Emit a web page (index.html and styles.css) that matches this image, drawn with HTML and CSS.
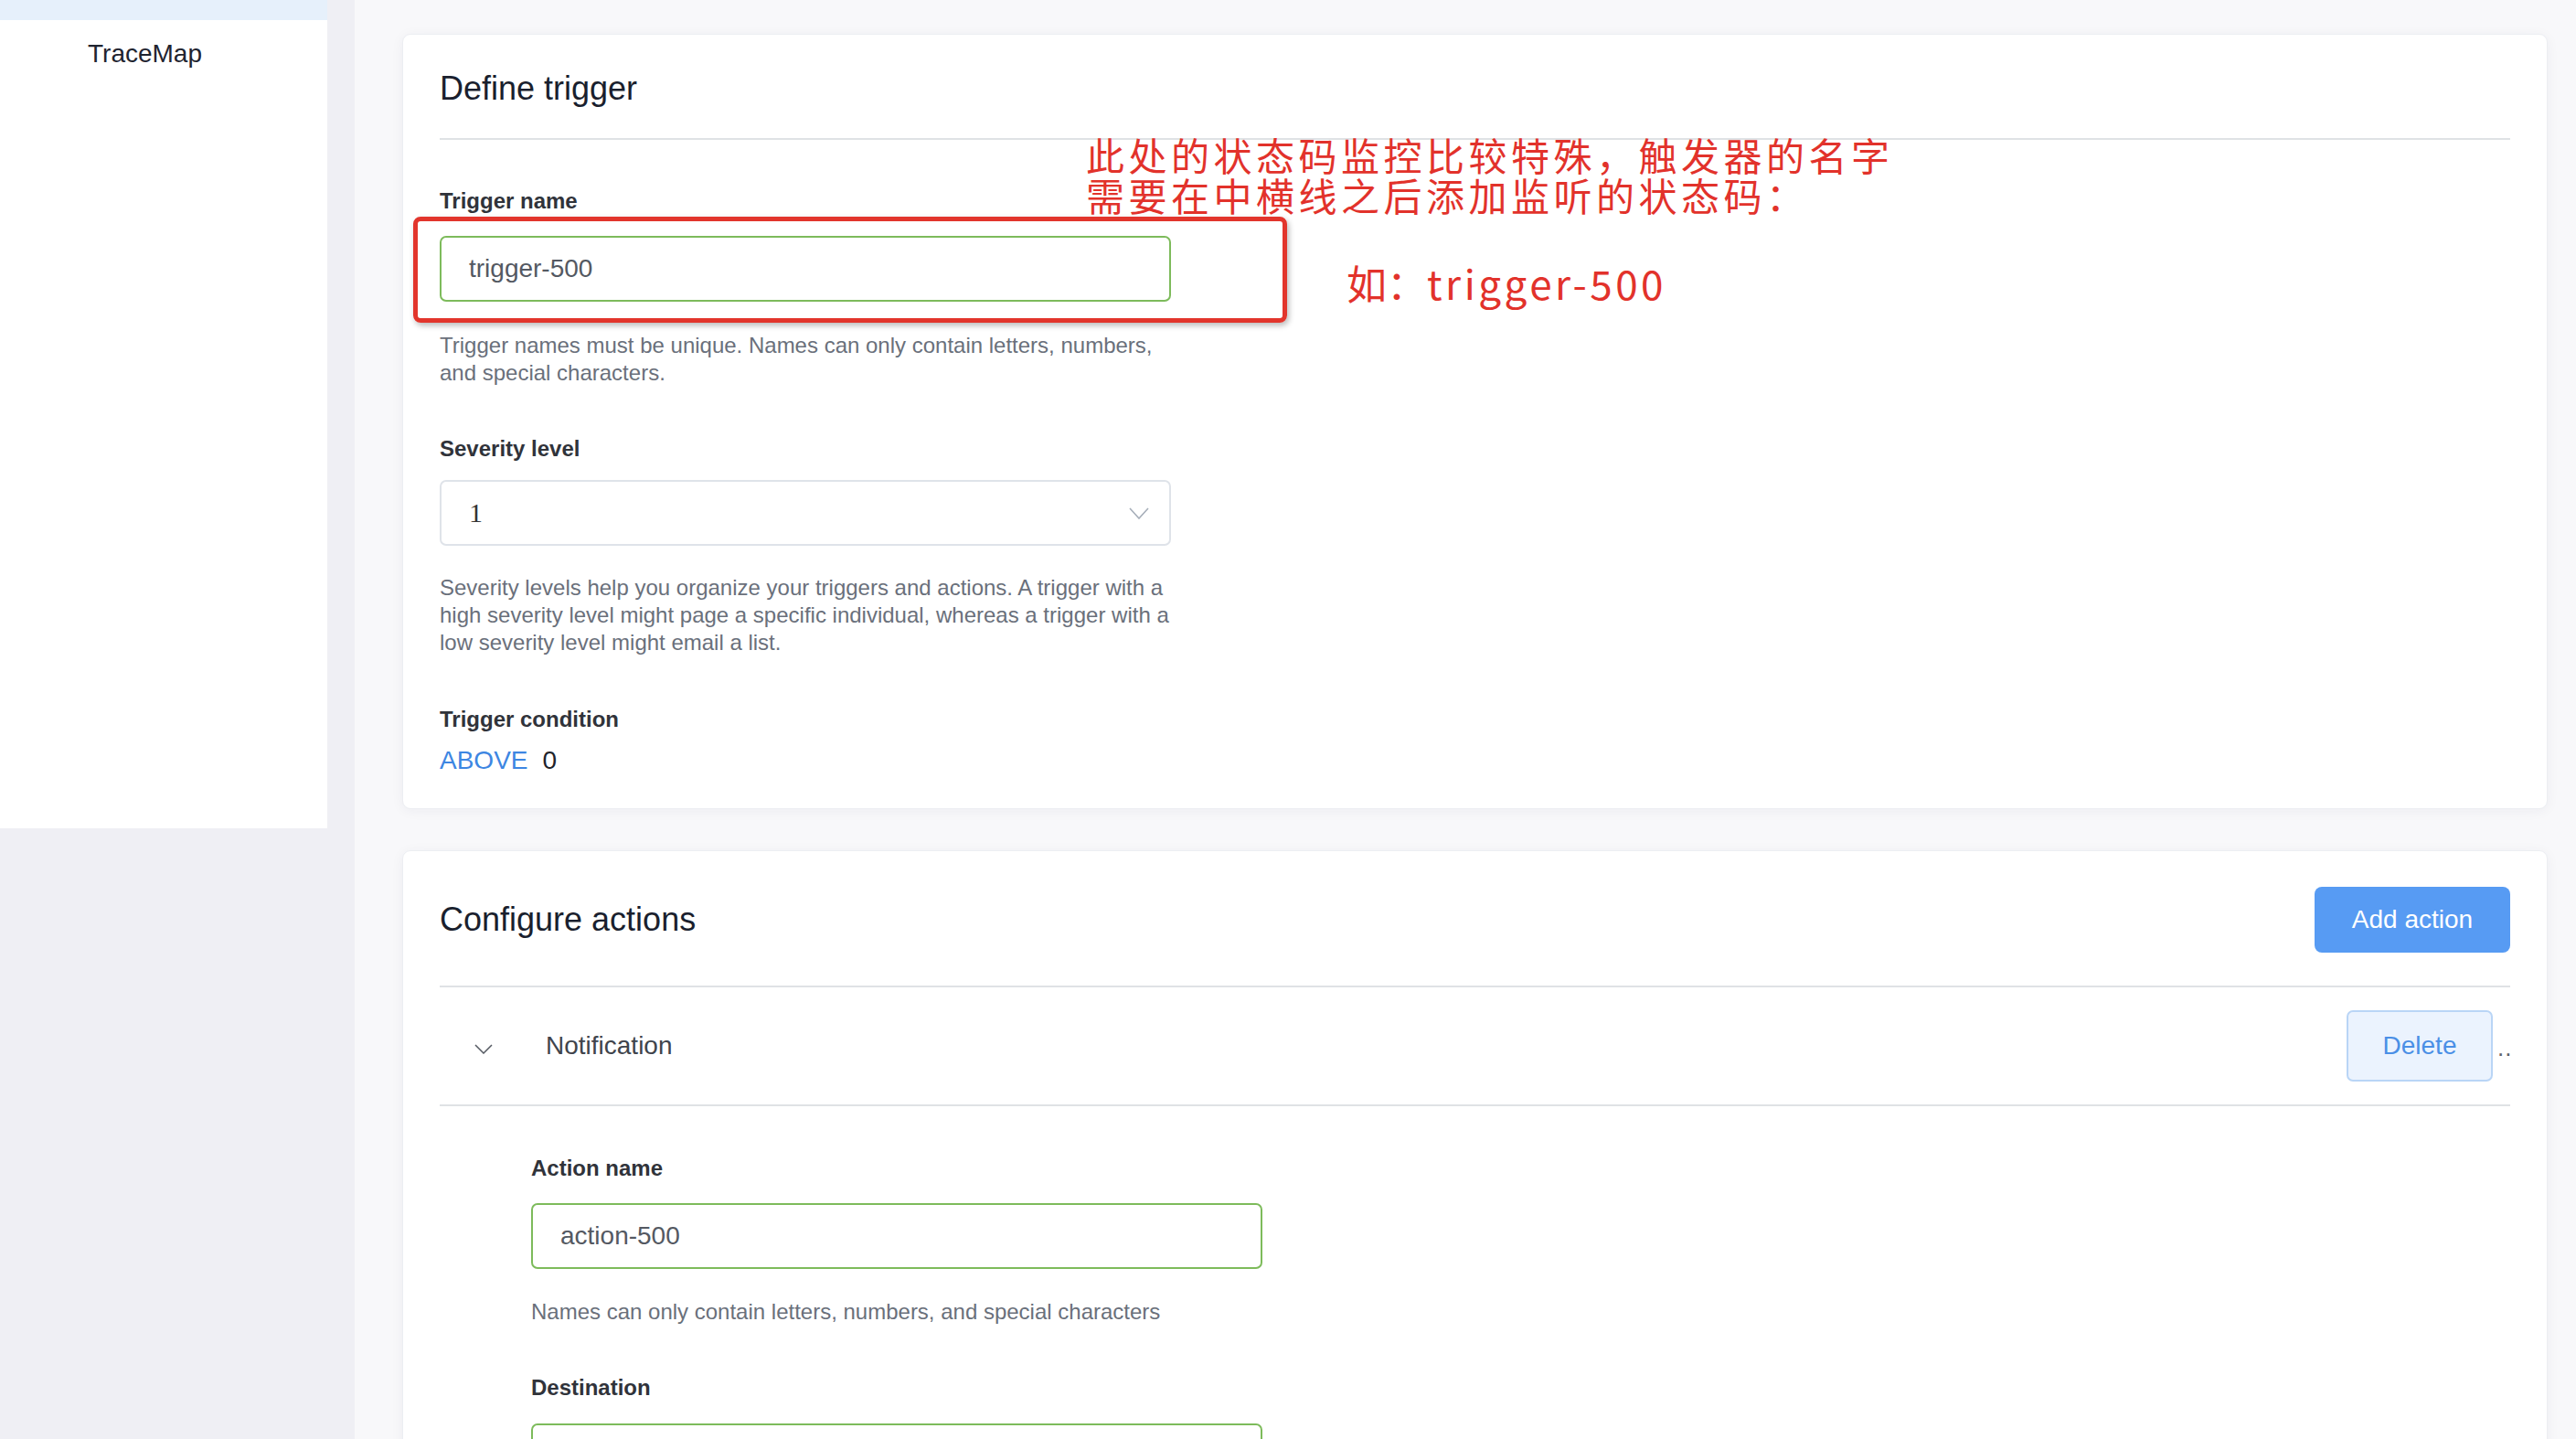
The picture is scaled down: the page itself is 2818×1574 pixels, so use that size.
FILE: index.html
```html
<!DOCTYPE html>
<html lang="en">
<head>
<meta charset="utf-8">
<title>Define trigger</title>
<link rel="stylesheet" href="styles.css">
</head>
<body>
<aside class="side-col">
  <nav class="sidebar">
    <div class="side-active"></div>
    <div class="side-item">TraceMap</div>
  </nav>
</aside>
<main class="main">
  <section class="card card-trigger">
    <h2 class="card-title">Define trigger</h2>
    <div class="divider"></div>

    <div class="label label-first">Trigger name</div>
    <div class="input-wrap">
      <div class="input input-valid">trigger-500</div>
      <div class="mark-box"></div>
    </div>
    <p class="help help-first">Trigger names must be unique. Names can only contain letters, numbers,<br>and special characters.</p>

    <div class="label">Severity level</div>
    <div class="input select">
      <span class="select-value">1</span>
      <svg class="select-chev" width="22" height="13" viewBox="0 0 22 13"><polyline points="1,1 11,12 21,1" fill="none" stroke="#a6aeb9" stroke-width="1.6"/></svg>
    </div>
    <p class="help help-sev">Severity levels help you organize your triggers and actions. A trigger with a<br>high severity level might page a specific individual, whereas a trigger with a<br>low severity level might email a list.</p>

    <div class="label label-cond">Trigger condition</div>
    <div class="condition"><span class="cond-op">ABOVE</span><span class="cond-val">0</span></div>

    <div class="note note-main">此处的状态码监控比较特殊，触发器的名字<br>需要在中横线之后添加监听的状态码：</div>
    <div class="note note-example">如：<span class="note-latin">trigger-500</span></div>
  </section>

  <section class="card card-actions">
    <div class="card-head">
      <h2 class="card-title-row">Configure actions</h2>
      <button class="btn-primary">Add action</button>
    </div>
    <div class="divider divider-head"></div>
    <div class="action-row">
      <div class="action-left">
        <svg class="row-chev" width="20" height="11" viewBox="0 0 20 11"><polyline points="1,1 10,10 19,1" fill="none" stroke="#555a62" stroke-width="1.5"/></svg>
        <span class="action-title">Notification</span>
      </div>
      <div class="action-right">
        <button class="btn-delete">Delete</button>
        <span class="more">..</span>
      </div>
    </div>
    <div class="divider"></div>
    <div class="action-body">
      <div class="label label-action">Action name</div>
      <div class="input input-valid">action-500</div>
      <p class="help help-action">Names can only contain letters, numbers, and special characters</p>
      <div class="label label-dest">Destination</div>
      <div class="input input-valid"></div>
    </div>
  </section>
</main>
</body>
</html>
```
FILE: styles.css
```css
html, body {
  margin: 0;
  padding: 0;
}
body {
  width: 2818px;
  height: 1574px;
  overflow: hidden;
  display: flex;
  background: #f8f8fa;
  font-family: "Liberation Sans", Arial, sans-serif;
  color: #1d2230;
}

/* sidebar */
.side-col {
  width: 388px;
  flex-shrink: 0;
  background: #efeff4;
}
.sidebar {
  width: 358px;
  height: 906px;
  background: #ffffff;
}
.side-active {
  height: 22px;
  background: #e6f0fb;
}
.side-item {
  margin-top: 20px;
  padding-left: 96px;
  font-size: 28px;
  line-height: 34px;
  color: #1f2430;
}

/* main */
.main {
  flex: 1;
  padding: 37px 31px 0 52px;
  display: flex;
  flex-direction: column;
  gap: 45px;
  min-width: 0;
}
.card {
  position: relative;
  box-sizing: border-box;
  background: #ffffff;
  border: 1px solid #eceef2;
  border-radius: 9px;
  box-shadow: 0 2px 14px rgba(30, 40, 70, 0.05);
  padding: 0 40px;
}
.card-trigger {
  height: 848px;
  padding-bottom: 36px;
}
.card-actions {
  flex: 1;
}

.card-title {
  margin: 37px 0 0;
  font-size: 36px;
  line-height: 44px;
  font-weight: 400;
  color: #1a1f2e;
}
.divider {
  height: 2px;
  background: #dfe2e5;
}
.card-trigger .divider {
  margin-top: 32px;
}

.label {
  margin-top: 54px;
  font-size: 24px;
  line-height: 28px;
  font-weight: 700;
  color: #30333a;
}
.label-first {
  margin-top: 53px;
}
.input {
  box-sizing: border-box;
  width: 800px;
  height: 72px;
  border: 2px solid #dfe3e9;
  border-radius: 7px;
  padding-left: 30px;
  display: flex;
  align-items: center;
  font-size: 28px;
  color: #545962;
  margin-top: 22px;
}
.input-valid {
  border-color: #7dbb5b;
}
.input-wrap {
  position: relative;
  width: 800px;
  margin-top: 24px;
}
.input-wrap .input {
  margin-top: 0;
}
.mark-box {
  position: absolute;
  left: -29px;
  top: -21px;
  width: 956px;
  height: 116px;
  box-sizing: border-box;
  border: 5px solid #e2352c;
  border-radius: 8px;
  box-shadow: 2px 3px 6px rgba(0, 0, 0, 0.28);
}
.select {
  margin-top: 20px;
  justify-content: space-between;
  padding-right: 22px;
}
.select-value {
  font-family: "Liberation Serif", "Times New Roman", serif;
  font-size: 30px;
  color: #333;
}
.help {
  margin: 31px 0 0;
  font-size: 24px;
  line-height: 30px;
  color: #6a707b;
  white-space: nowrap;
}
.help-first {
  margin-top: 33px;
}
.label-cond {
  margin-top: 55px;
}
.condition {
  margin-top: 14px;
  font-size: 28px;
  line-height: 34px;
  display: flex;
  gap: 16px;
}
.cond-op {
  color: #3d86e2;
}
.cond-val {
  color: #1f232b;
}

/* annotation */
.note {
  position: absolute;
  color: #e2322b;
  font-family: "Noto Sans CJK SC", sans-serif;
}
.note-main {
  left: 747px;
  top: 109px;
  font-size: 42px;
  line-height: 44px;
  letter-spacing: 4.5px;
  white-space: nowrap;
}
.note-example {
  left: 1032px;
  top: 246px;
  font-size: 44px;
  line-height: 50px;
  white-space: nowrap;
}
.note-latin {
  letter-spacing: 3.5px;
}

/* actions card */
.card-head {
  margin-top: 39px;
  height: 72px;
  display: flex;
  align-items: center;
  justify-content: space-between;
}
.card-title-row {
  margin: 0;
  font-size: 36px;
  line-height: 44px;
  font-weight: 400;
  color: #1a1f2e;
}
.btn-primary {
  width: 214px;
  height: 72px;
  border: none;
  border-radius: 8px;
  background: #579bf3;
  color: #ffffff;
  font-family: "Liberation Sans", Arial, sans-serif;
  font-size: 28px;
  padding: 0;
}
.divider-head {
  margin-top: 36px;
}
.action-row {
  height: 128px;
  display: flex;
  align-items: center;
  justify-content: space-between;
}
.action-left {
  display: flex;
  align-items: center;
  padding-left: 38px;
}
.row-chev {
  display: block;
  margin-top: 6px;
}
.action-title {
  margin-left: 58px;
  font-size: 28px;
  color: #40444c;
}
.action-right {
  display: flex;
  align-items: center;
  gap: 5px;
}
.btn-delete {
  width: 160px;
  height: 78px;
  box-sizing: border-box;
  border: 2px solid #b9d5f6;
  border-radius: 7px;
  background: #ebf3fe;
  color: #4a8fe6;
  font-family: "Liberation Sans", Arial, sans-serif;
  font-size: 28px;
  padding: 0;
}
.more {
  font-size: 26px;
  color: #5f636a;
  width: 14px;
  letter-spacing: 1px;
  margin-top: 4px;
}
.action-body {
  padding-left: 100px;
}
.label-action {
  margin-top: 54px;
}
.action-body .input {
  margin-top: 24px;
}
.help-action {
  margin-top: 32px;
}
.label-dest {
  margin-top: 54px;
}
.action-body .label-dest + .input {
  margin-top: 25px;
}
```
